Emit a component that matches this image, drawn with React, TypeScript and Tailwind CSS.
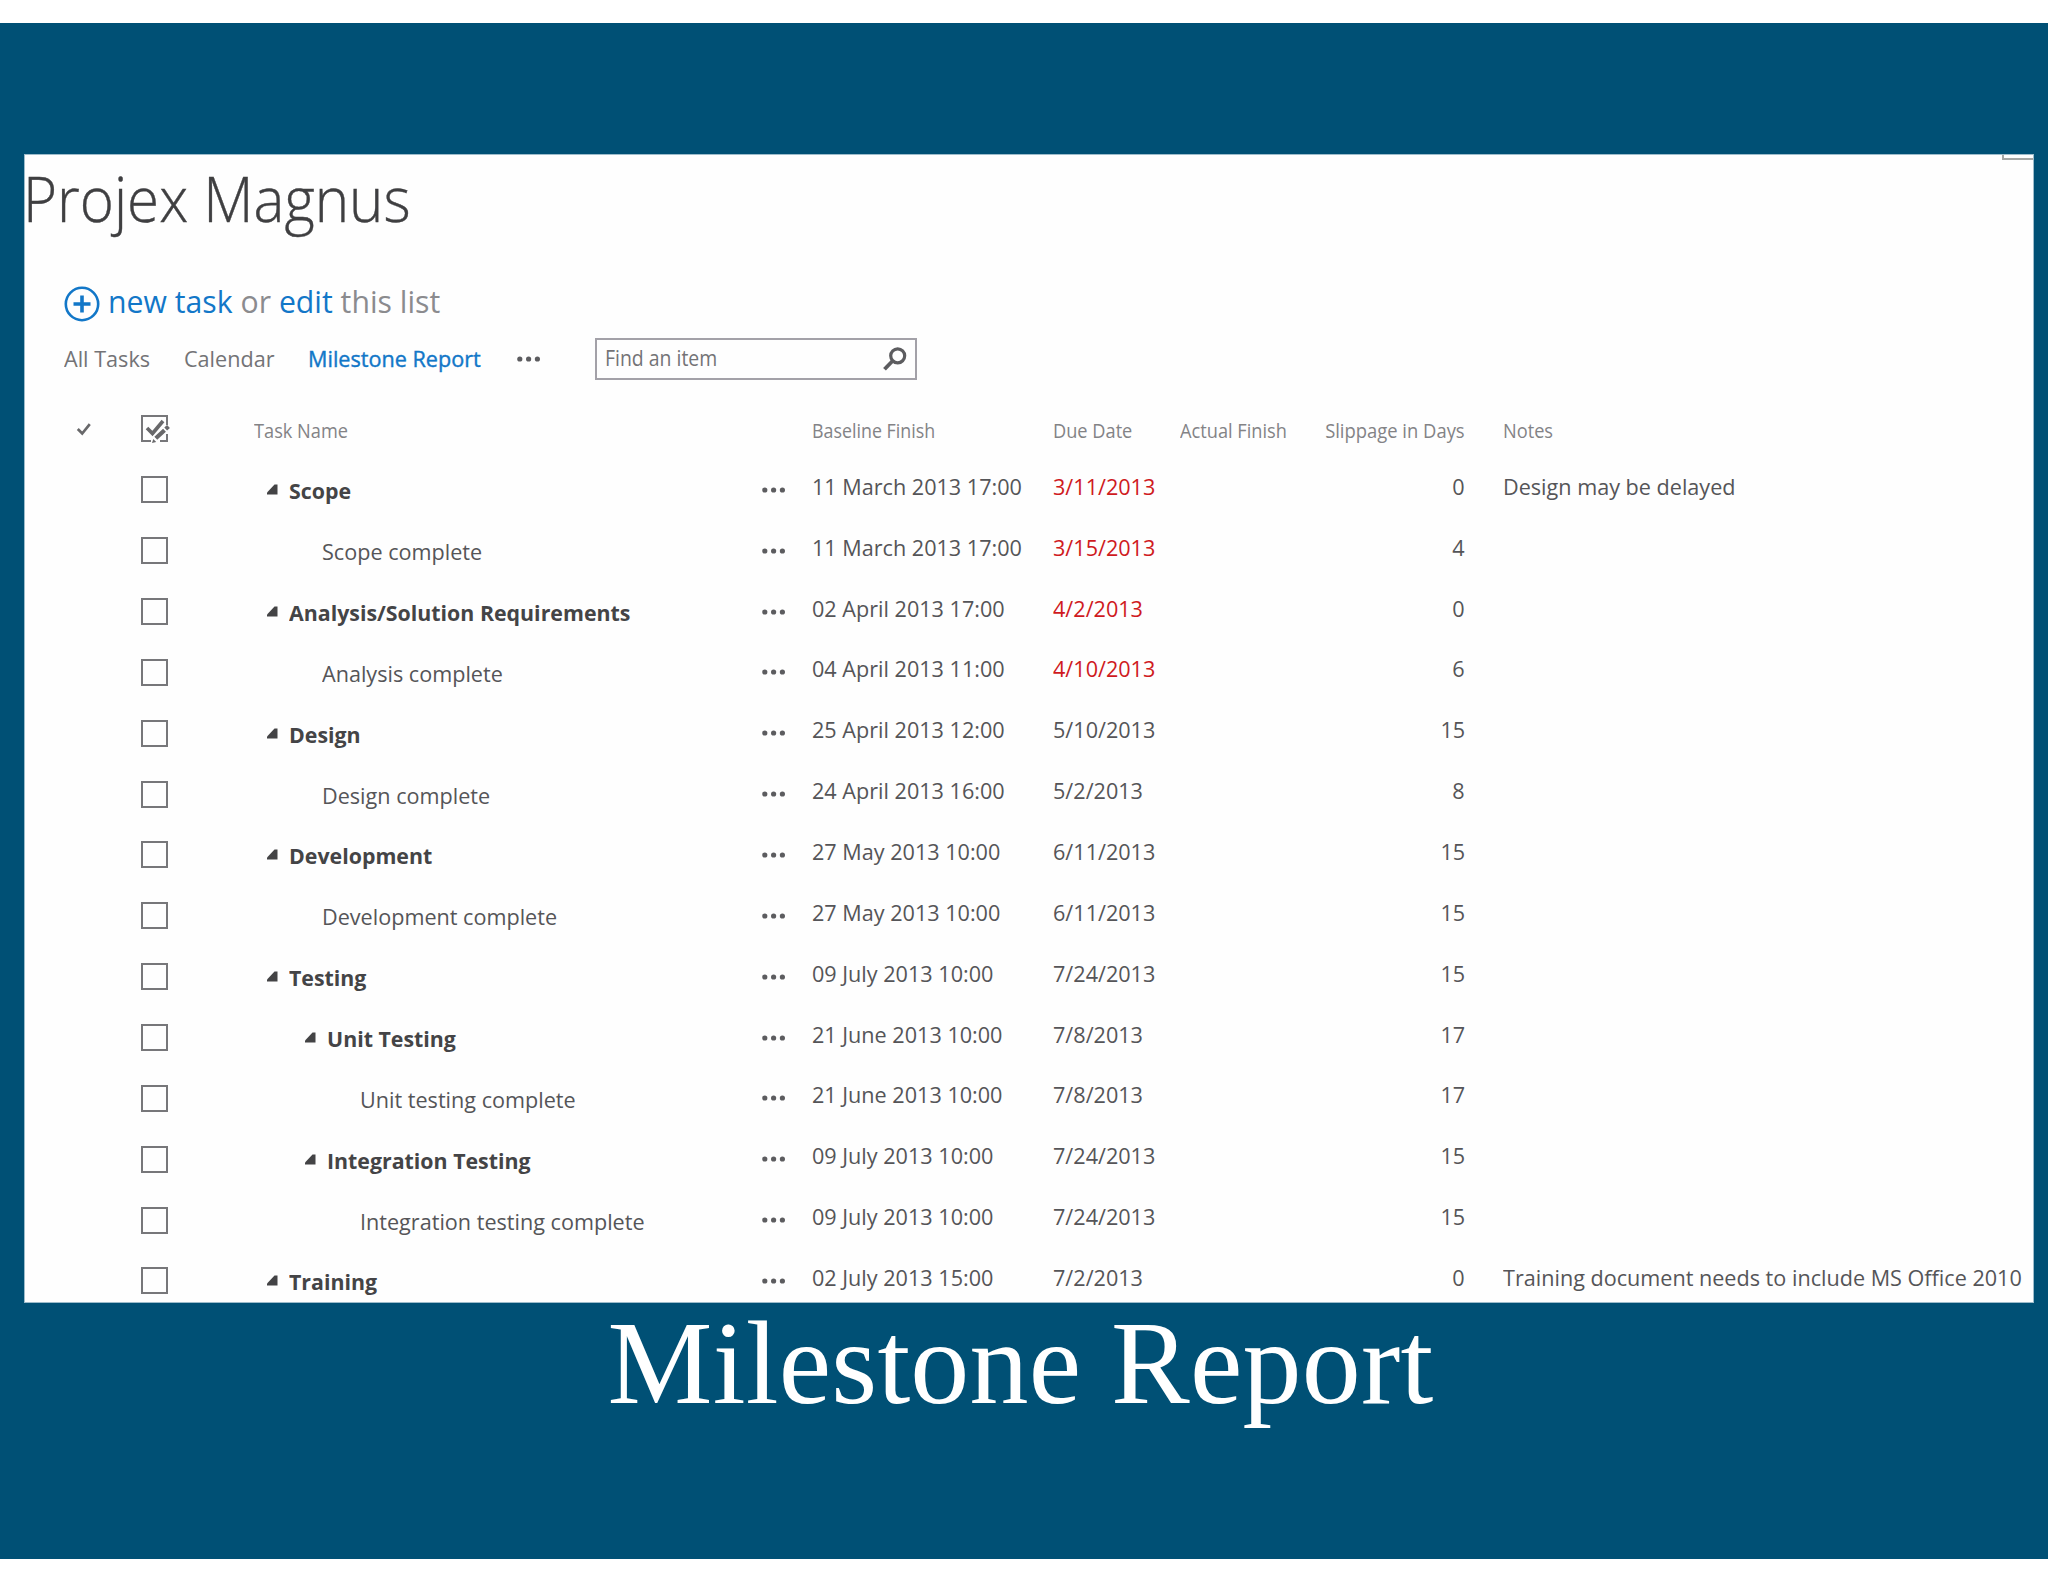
import type { ReactNode } from "react";

type Task = {
  name: string;
  level: 0 | 1 | 2 | 3;
  baseline: string;
  due: string;
  late?: boolean;
  slip: number;
  notes?: string;
};

const tasks: Task[] = [
  { name: "Scope", level: 0, baseline: "11 March 2013 17:00", due: "3/11/2013", late: true, slip: 0, notes: "Design may be delayed" },
  { name: "Scope complete", level: 1, baseline: "11 March 2013 17:00", due: "3/15/2013", late: true, slip: 4 },
  { name: "Analysis/Solution Requirements", level: 0, baseline: "02 April 2013 17:00", due: "4/2/2013", late: true, slip: 0 },
  { name: "Analysis complete", level: 1, baseline: "04 April 2013 11:00", due: "4/10/2013", late: true, slip: 6 },
  { name: "Design", level: 0, baseline: "25 April 2013 12:00", due: "5/10/2013", slip: 15 },
  { name: "Design complete", level: 1, baseline: "24 April 2013 16:00", due: "5/2/2013", slip: 8 },
  { name: "Development", level: 0, baseline: "27 May 2013 10:00", due: "6/11/2013", slip: 15 },
  { name: "Development complete", level: 1, baseline: "27 May 2013 10:00", due: "6/11/2013", slip: 15 },
  { name: "Testing", level: 0, baseline: "09 July 2013 10:00", due: "7/24/2013", slip: 15 },
  { name: "Unit Testing", level: 2, baseline: "21 June 2013 10:00", due: "7/8/2013", slip: 17 },
  { name: "Unit testing complete", level: 3, baseline: "21 June 2013 10:00", due: "7/8/2013", slip: 17 },
  { name: "Integration Testing", level: 2, baseline: "09 July 2013 10:00", due: "7/24/2013", slip: 15 },
  { name: "Integration testing complete", level: 3, baseline: "09 July 2013 10:00", due: "7/24/2013", slip: 15 },
  { name: "Training", level: 0, baseline: "02 July 2013 15:00", due: "7/2/2013", slip: 0, notes: "Training document needs to include MS Office 2010" },
];

const columns =
  "grid grid-cols-[116px_113px_508px_50px_241px_127px_145px_140px_38px_1fr] items-center whitespace-nowrap";

const indent = {
  0: "pl-[13px]",
  1: "pl-[68px]",
  2: "pl-[51px]",
  3: "pl-[106px]",
};

const widths = {
  body: "inline-block origin-left scale-x-[0.982]",
  bold: "inline-block origin-left scale-x-[0.97]",
  number: "inline-block origin-right scale-x-[0.982]",
  label: "inline-block origin-left scale-x-[0.91]",
  labelRight: "inline-block origin-right scale-x-[0.92]",
  title: "inline-block origin-left scale-x-[0.925]",
};

function Text({ children, kind = "body" }: { children: ReactNode; kind?: keyof typeof widths }) {
  return <span className={widths[kind]}>{children}</span>;
}

function Dots() {
  return (
    <svg width="24" height="6" viewBox="0 0 24 6" fill="#5c5c5f">
      <circle cx="2.8" cy="3" r="2.6" />
      <circle cx="11.6" cy="3" r="2.6" />
      <circle cx="20.4" cy="3" r="2.6" />
    </svg>
  );
}

function TaskRow({ task }: { task: Task }) {
  const group = task.level === 0 || task.level === 2;
  return (
    <div className={`${columns} h-[60.86px] text-[22px] leading-[30px] text-[#555558]`}>
      <span />
      <span className="h-[27px] w-[27px] border-2 border-[#77777a]" />
      <div className={`flex items-center ${indent[task.level]}`}>
        {group && (
          <svg className="mr-[11px] shrink-0" width="11" height="11" viewBox="0 0 11 11">
            <path d="M7.500 0.500H10.500V10.500H0V8.500Z" fill="#434345" />
          </svg>
        )}
        <span className={group ? "pt-px font-bold text-[#444446]" : "pt-px"}>
          <Text kind={group ? "bold" : "body"}>{task.name}</Text>
        </span>
      </div>
      <Dots />
      <span className="-mt-2"><Text>{task.baseline}</Text></span>
      <span className={task.late ? "-mt-2 text-[#cf1a1e]" : "-mt-2"}><Text>{task.due}</Text></span>
      <span />
      <span className="-mt-2 text-right"><Text kind="number">{task.slip}</Text></span>
      <span />
      <span className="-mt-2"><Text>{task.notes}</Text></span>
    </div>
  );
}

export default function App() {
  return (
    <div className="flex h-[1582px] w-[2048px] flex-col bg-white py-[23px] font-['Open_Sans',sans-serif]">
      <div className="h-[1536px] shrink-0 bg-[#005075] pt-[131px]">
        <div className="relative ml-[24px] h-[1149px] w-[2010px] overflow-hidden border border-[#9dbccb] bg-[#fefefe]">
          <div className="absolute top-0 right-0 h-[5px] w-[31px] border-b-2 border-l-2 border-[#a5a7a5]" />
          <h1 className="-ml-[2px] h-[120px] text-[63px] leading-[86px] font-light text-[#3f3f41] [-webkit-text-stroke:0.4px_#3f3f41]">
            <Text kind="title">Projex Magnus</Text>
          </h1>
          <div className="flex h-[52px] items-center pl-[39px] text-[31px] text-[#8b8b8e]">
            <svg className="mt-[6px] mr-[8px]" width="36" height="36" viewBox="0 0 36 36" fill="none" stroke="#1277c8">
              <circle cx="18" cy="18" r="16.2" strokeWidth="2.6" />
              <path d="M18 9.5v17M9.5 18h17" strokeWidth="3.6" />
            </svg>
            <span className="inline-block origin-left scale-x-[0.975]">
              <span className="text-[#1277c8]">new task</span> or <span className="text-[#1277c8]">edit</span> this list
            </span>
          </div>
          <div className="flex h-[64px] items-center text-[22px] text-[#737376]">
            <span className="-mt-px ml-[39px] w-[120px]"><Text>All Tasks</Text></span>
            <span className="-mt-px w-[124px]"><Text>Calendar</Text></span>
            <span className="-mt-px w-[209px] text-[#1277c8] [-webkit-text-stroke:0.4px_#1277c8]"><Text>Milestone Report</Text></span>
            <Dots />
            <div className="ml-[54px] flex h-[42px] w-[322px] items-center justify-between border-2 border-[#a3a1a8] pr-[8px] pl-2 text-[21px]">
              <Text kind="title">Find an item</Text>
              <svg width="24" height="24" viewBox="0 0 24 24" fill="none" stroke="#5c5c5f">
                <circle cx="14.7" cy="8.8" r="7" strokeWidth="3.2" />
                <path d="M9.5 14L1.5 22.3" strokeWidth="3.8" />
              </svg>
            </div>
          </div>
          <div className={`${columns} mt-[3.4px] h-[65px] pt-[5px] text-[20px] text-[#838386]`}>
            <svg className="ml-[51px]" width="16" height="15" viewBox="0 0 18 16" fill="none" stroke="#68686a" strokeWidth="3">
              <path d="M2 7.5L7 12.5L15.5 2" />
            </svg>
            <svg width="30" height="30" viewBox="0 0 30 30" fill="none">
              <path d="M26 11V2H1V27H10M19 27H26V20" stroke="#77777a" strokeWidth="2" />
              <path d="M6 14L11.500 19.500L22 7" stroke="#68686a" strokeWidth="3.6" />
              <path d="M13.500 25L26 13.500" stroke="#fefefe" strokeWidth="6.400" />
              <path d="M14.800 24.200L23.500 16.200M24.700 15L27.500 12.500" stroke="#68686a" strokeWidth="4.200" />
              <path d="M11 29L12.300 25L15.200 28Z" fill="#68686a" />
            </svg>
            <span className="pt-[4px]"><Text kind="label">Task Name</Text></span>
            <span />
            <span className="pt-[4px]"><span className="inline-block origin-left scale-x-[0.892]">Baseline Finish</span></span>
            <span className="pt-[4px]"><Text kind="label">Due Date</Text></span>
            <span className="pt-[4px]"><Text kind="label">Actual Finish</Text></span>
            <span className="flex justify-end pt-[4px]"><Text kind="labelRight">Slippage in Days</Text></span>
            <span />
            <span className="pt-[4px]"><Text kind="label">Notes</Text></span>
          </div>
          {tasks.map((task) => (
            <TaskRow key={task.name} task={task} />
          ))}
        </div>
        <div className="-mt-[4px] pr-[7px] text-center font-['Liberation_Serif',serif] text-[118px] leading-[130px] tracking-[0.2px] text-white">
          Milestone Report
        </div>
      </div>
    </div>
  );
}
